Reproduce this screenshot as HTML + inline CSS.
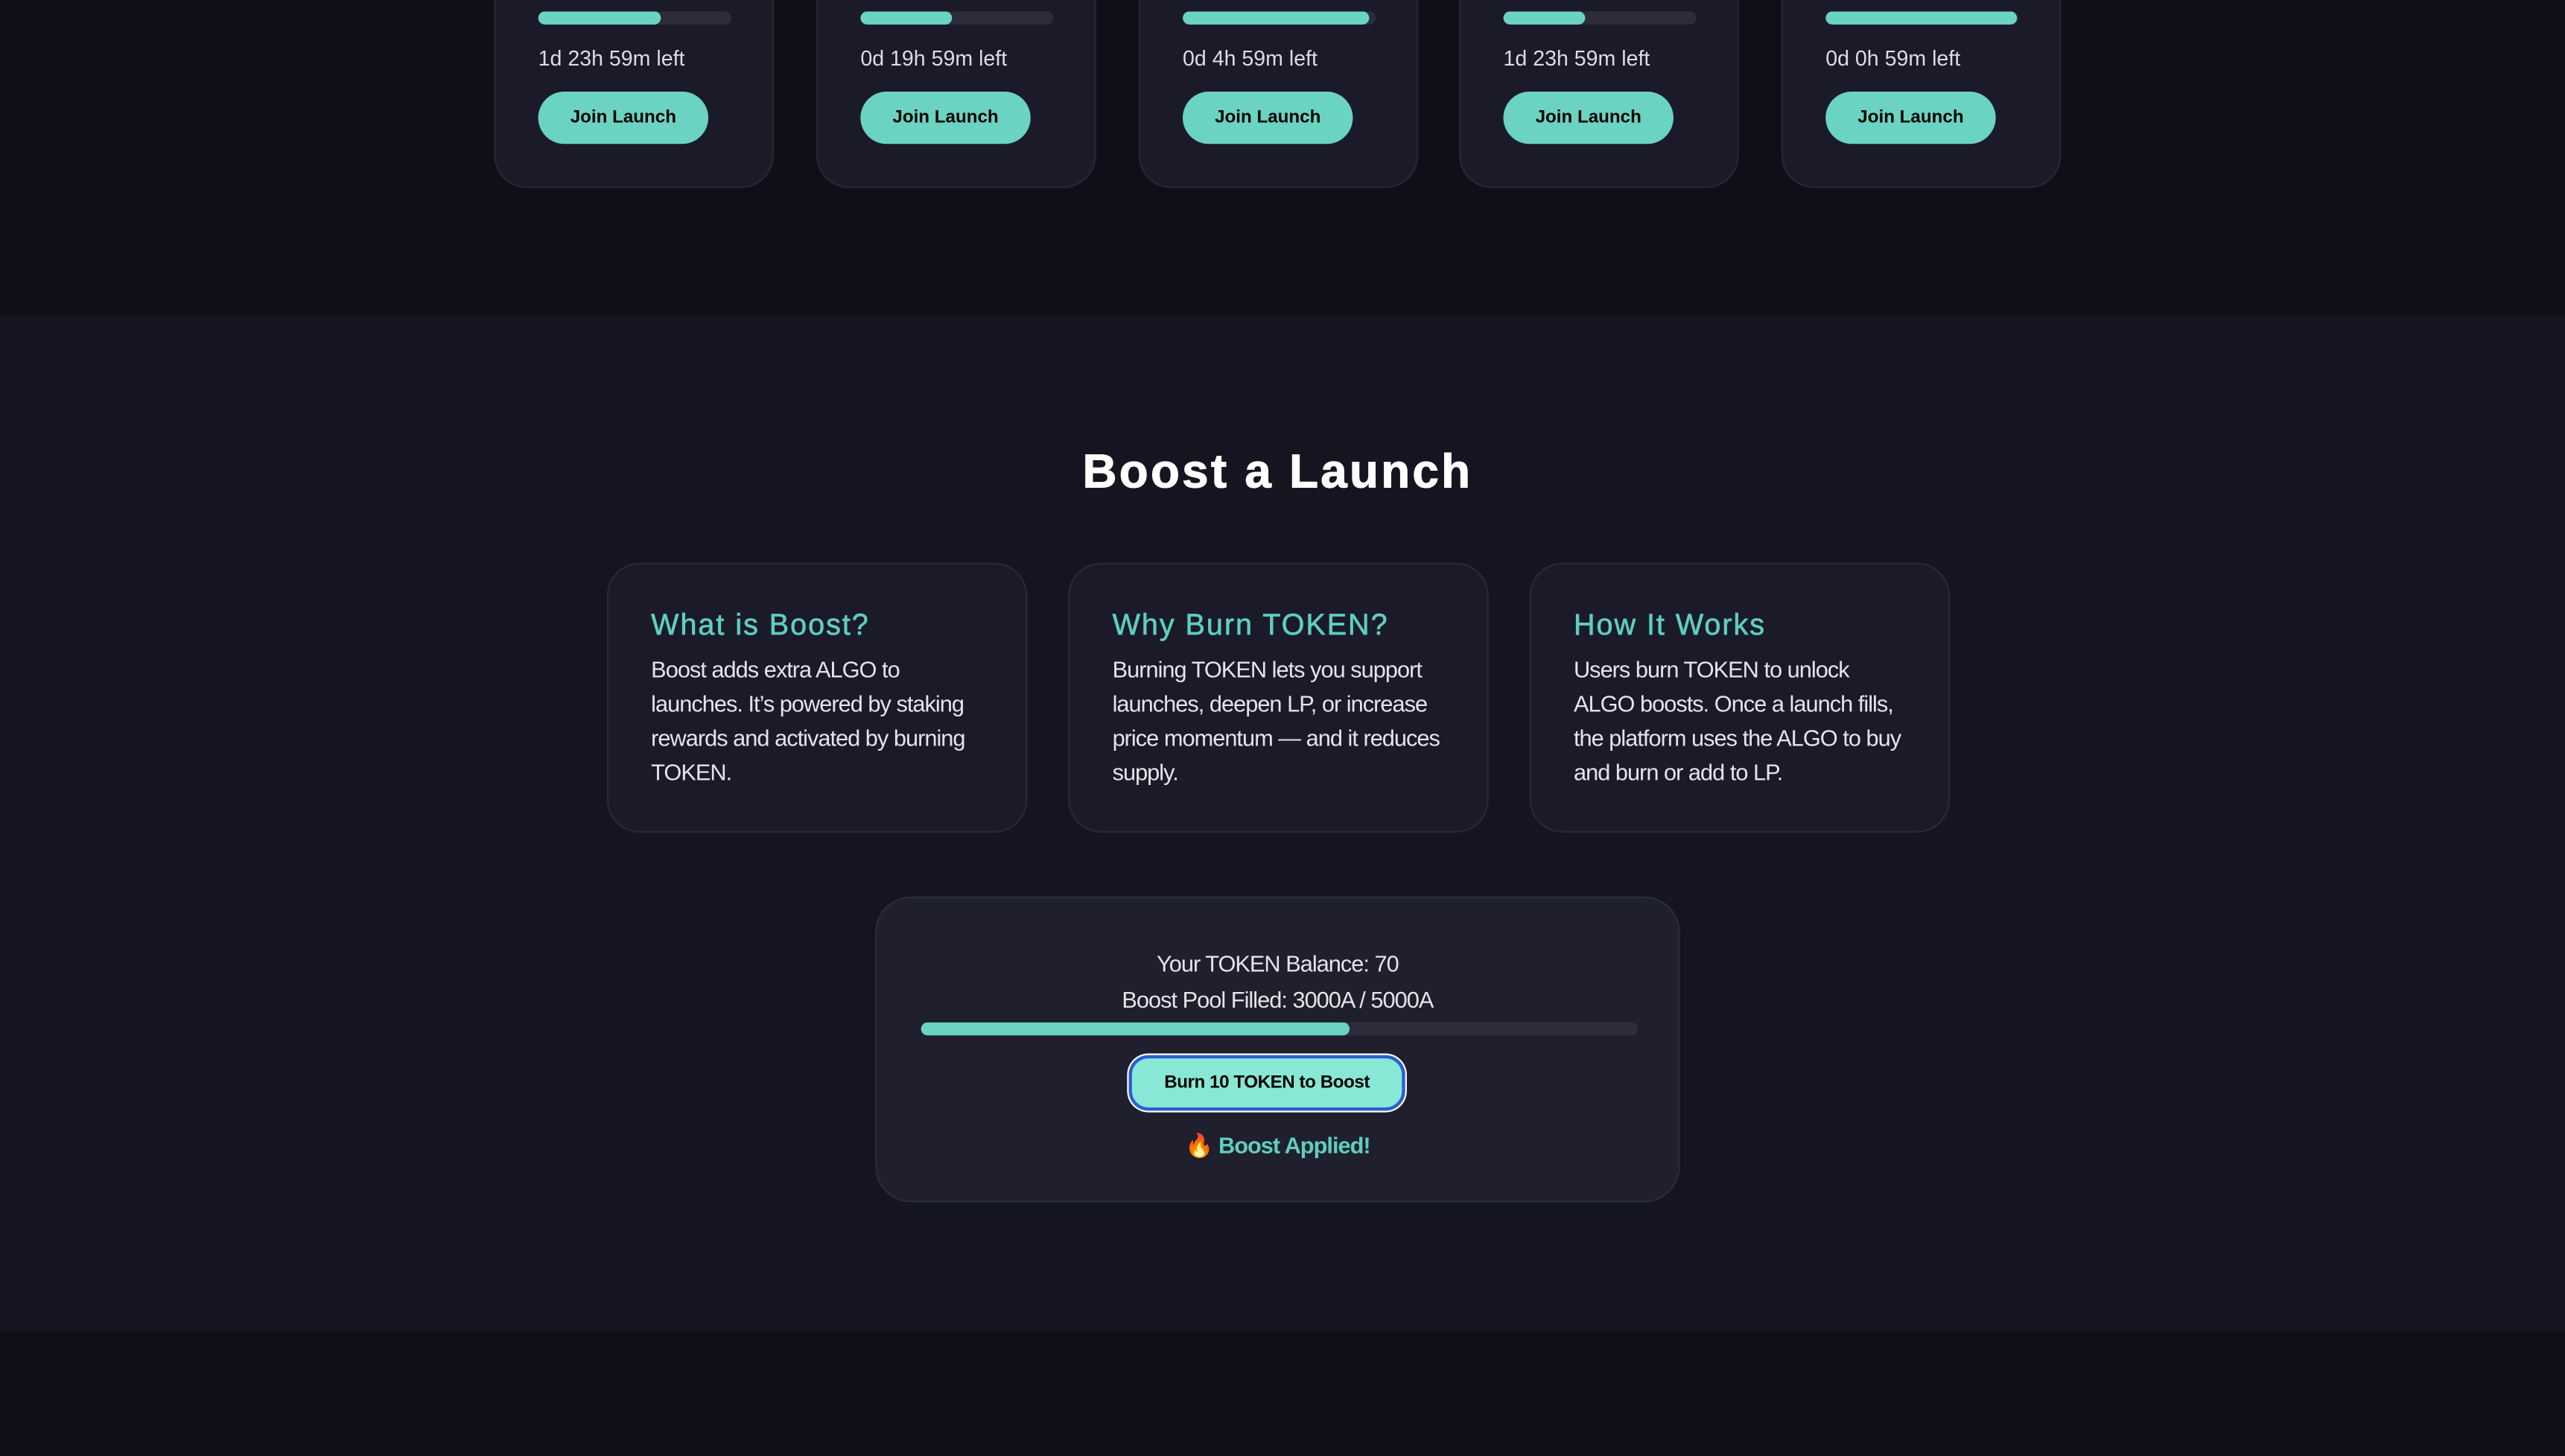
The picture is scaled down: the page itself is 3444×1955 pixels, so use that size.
<!DOCTYPE html>
<html><head><meta charset="utf-8"><style>
html,body{margin:0;padding:0;background:#0f0f19;width:3444px;height:1955px;overflow:hidden}
#w{width:1568px;height:891px;transform:scale(2.19643);transform-origin:0 0;position:relative;font-family:"Liberation Sans",Arial,sans-serif;color:#e4e4ea}
.c{position:absolute;top:-40px;width:171px;height:155px;background:#1b1a29;border:1px solid #252833;border-radius:20px;box-sizing:border-box}
.bar{position:absolute;left:26px;top:46px;width:118px;height:8px;background:#2c2c3a;border-radius:4px;overflow:hidden}
.bar i{display:block;height:100%;background:#6bd3c1;border-radius:4px}
.t{position:absolute;left:26px;top:67px;font-size:13px;color:#dcdce2}
.b{position:absolute;left:26px;top:95px;width:104px;height:32px;border-radius:16px;background:#6bd3c1;color:#000;font-weight:bold;font-size:11px;line-height:33px;text-align:center}
#sec{position:absolute;left:0;top:193px;width:1568px;height:621px;background:#151522}
h1{position:absolute;left:0;width:1568px;top:273px;margin:0;text-align:center;font-size:29px;letter-spacing:1.5px;font-weight:bold;color:#fff;-webkit-text-stroke:0.5px #fff;padding-right:6px;box-sizing:border-box}
.ic{position:absolute;top:344px;width:257px;height:165px;background:#1b1a29;border:1px solid #272a35;border-radius:20px;box-sizing:border-box;padding:27px 26px}
.ic h3{margin:0 0 6px;font-size:18px;color:#5fcfbc;font-weight:normal;letter-spacing:0.9px;-webkit-text-stroke:0.3px #5fcfbc}
.ic p{margin:0;font-size:14px;line-height:21px;color:#e4e4ea;letter-spacing:-0.45px}
#bx{position:absolute;left:535px;top:548px;width:492px;height:187px;background:#1f1f2d;border:1px solid #2a2d38;border-radius:22px;box-sizing:border-box;text-align:center}
.l{letter-spacing:-0.45px}
</style></head><body><div id="w">
<div class="c" style="left:302px"><div class="bar"><i style="width:75px"></i></div><div class="t">1d 23h 59m left</div><div class="b">Join Launch</div></div>
<div class="c" style="left:499px"><div class="bar"><i style="width:56px"></i></div><div class="t">0d 19h 59m left</div><div class="b">Join Launch</div></div>
<div class="c" style="left:696px"><div class="bar"><i style="width:114px"></i></div><div class="t">0d 4h 59m left</div><div class="b">Join Launch</div></div>
<div class="c" style="left:892px"><div class="bar"><i style="width:50px"></i></div><div class="t">1d 23h 59m left</div><div class="b">Join Launch</div></div>
<div class="c" style="left:1089px"><div class="bar"><i style="width:117px"></i></div><div class="t">0d 0h 59m left</div><div class="b">Join Launch</div></div>
<div id="sec"></div>
<h1>Boost a Launch</h1>
<div class="ic" style="left:371px"><h3>What is Boost?</h3><p>Boost adds extra ALGO to<br>launches. It’s powered by staking<br>rewards and activated by burning<br>TOKEN.</p></div>
<div class="ic" style="left:653px"><h3>Why Burn TOKEN?</h3><p>Burning TOKEN lets you support<br>launches, deepen LP, or increase<br>price momentum — and it reduces<br>supply.</p></div>
<div class="ic" style="left:935px"><h3>How It Works</h3><p>Users burn TOKEN to unlock<br>ALGO boosts. Once a launch fills,<br>the platform uses the ALGO to buy<br>and burn or add to LP.</p></div>
<div id="bx">
<div class="l" style="position:absolute;left:0;right:0;top:32px;font-size:14px">Your TOKEN Balance: 70</div>
<div class="l" style="position:absolute;left:0;right:0;top:54px;font-size:14px">Boost Pool Filled: 3000A / 5000A</div>
<div style="position:absolute;left:27px;top:76px;width:438px;height:8px;background:#2d2d3b;border-radius:4px;overflow:hidden"><div style="width:262px;height:100%;background:#6bd3c1;border-radius:4px"></div></div>
<div style="position:absolute;left:154px;top:96px;width:169px;height:34px;box-sizing:border-box;border:2px solid #2a5fd0;box-shadow:0 0 0 1px #fff;border-radius:12px;background:#88e8d5;color:#000;font-weight:bold;font-size:11px;line-height:31px;letter-spacing:-0.2px">Burn 10 TOKEN to Boost</div>
<div class="l" style="position:absolute;left:0;right:0;top:143px;font-size:14px;font-weight:bold;color:#5fcfbc">🔥 Boost Applied!</div>
</div>
</div></body></html>
